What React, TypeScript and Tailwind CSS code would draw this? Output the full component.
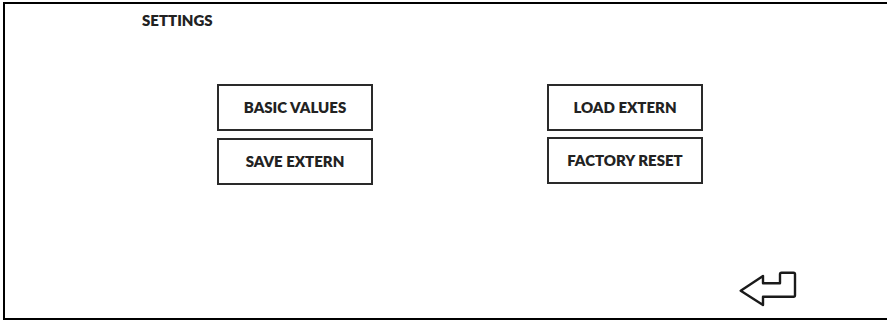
import React from "react";

function ReturnIcon() {
  return (
    <svg width="60" height="38" viewBox="0 0 60 38" fill="none">
      <path
        d="M2.7 20.7 L25 6 L25 13.3 L42 13.3 L42 4.2 Q42 2.7 43.5 2.7 L55.5 2.7 Q57 2.7 57 4.2 L57 25.2 Q57 26.7 55.5 26.7 L25 26.7 L25 35 Z"
        stroke="#1a1a1a"
        strokeWidth="2.4"
        strokeLinejoin="round"
      />
    </svg>
  );
}

function Btn({ label }: { label: string }) {
  return (
    <button className="w-[156px] h-[47px] border-2 border-[#2a2a2a] bg-white text-[15px] font-extrabold text-[#222] leading-none">
      {label}
    </button>
  );
}

export default function App() {
  return (
    <div className="w-[887px] h-[321px] bg-white overflow-hidden pt-[2px] pl-[3px]" style={{ fontFamily: "Lato, 'Open Sans', sans-serif" }}>
      <div className="w-[890px] h-[318px] border-t-2 border-l-2 border-b-2 border-black flex flex-col">
        <div className="pl-[137px] pt-[8px] text-[15px] font-extrabold text-[#222] leading-[16px]">SETTINGS</div>
        <div className="pl-[212px] pt-[56px] flex gap-[174px]">
          <div className="flex flex-col gap-[7px]">
            <Btn label="BASIC VALUES" />
            <Btn label="SAVE EXTERN" />
          </div>
          <div className="flex flex-col gap-[6px]">
            <Btn label="LOAD EXTERN" />
            <Btn label="FACTORY RESET" />
          </div>
        </div>
        <div className="mt-auto flex pl-[733px] pb-[10px]">
          <ReturnIcon />
        </div>
      </div>
    </div>
  );
}
